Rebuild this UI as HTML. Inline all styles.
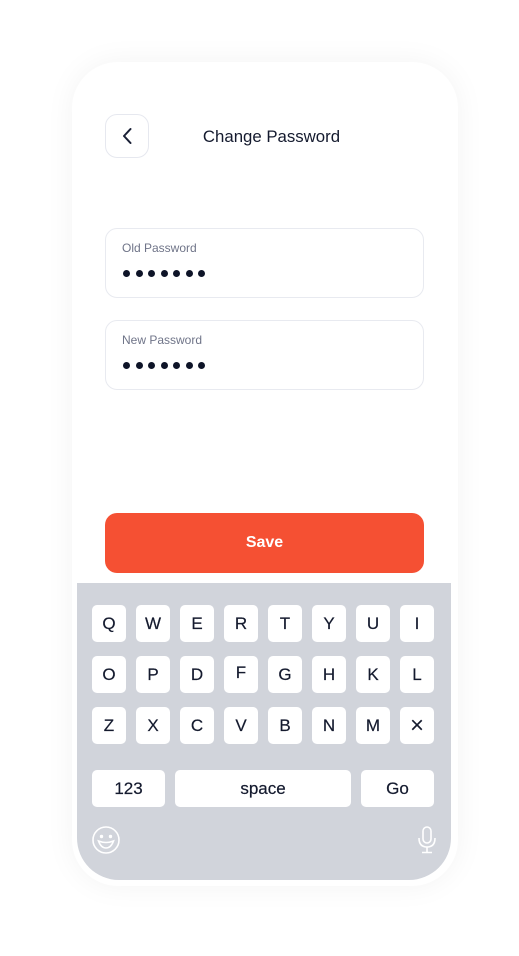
<!DOCTYPE html>
<html><head><style>
body{margin:0;width:519px;height:956px;background:#fff;font-family:"Liberation Sans",sans-serif;position:relative;overflow:hidden}
.card{position:absolute;left:72px;top:62px;width:386px;height:824px;border-radius:46px;background:#fff;box-shadow:0 0 30px rgba(0,0,0,0.05)}
.abs{position:absolute}
.back{left:105px;top:114px;width:42px;height:42px;border:1px solid #e6e8ef;border-radius:12px}
.title{left:0;width:543px;top:127px;text-align:center;font-size:16.8px;color:#141a2e}
.inp{left:105px;width:317px;height:68px;border:1px solid #e8eaf0;border-radius:12px}
.lbl{position:absolute;left:16px;top:12px;font-size:12px;color:#6f7488}
.dots{position:absolute;left:17px;top:41px;display:flex;gap:5.5px}
.dots i{width:7px;height:7px;border-radius:50%;background:#0e1428;display:block}
.save{left:105px;top:513px;width:319px;height:60px;background:#f55033;border-radius:12px;color:#fff;font-weight:bold;font-size:16px;text-align:center;line-height:60px}
.kb{left:77px;top:583px;width:374px;height:297px;background:#d1d4db;border-radius:0 0 42px 42px}
.k{position:absolute;width:34px;height:37px;background:#fff;border-radius:5px;text-align:center;line-height:37px;font-size:17px;color:#141a2e;-webkit-text-stroke:0.2px #141a2e}
</style></head><body>
<div class="card"></div>
<div class="abs back"><svg width="42" height="42"><path d="M24.5 14 L18 21 L24.5 28" fill="none" stroke="#1a2036" stroke-width="2" stroke-linecap="round" stroke-linejoin="round"/></svg></div>
<div class="abs title">Change Password</div>
<div class="abs inp" style="top:228px"><div class="lbl">Old Password</div><div class="dots"><i></i><i></i><i></i><i></i><i></i><i></i><i></i></div></div>
<div class="abs inp" style="top:320px"><div class="lbl">New Password</div><div class="dots"><i></i><i></i><i></i><i></i><i></i><i></i><i></i></div></div>
<div class="abs save">Save</div>
<div class="abs kb"></div>
<div id="keys"></div>
<div class="k" style="left:92px;top:770px;width:73px">123</div>
<div class="k" style="left:175px;top:770px;width:176px">space</div>
<div class="k" style="left:361px;top:770px;width:73px">Go</div>
<svg class="abs" style="left:91px;top:825px" width="30" height="30"><circle cx="15" cy="15" r="13" fill="none" stroke="#fff" stroke-width="1.6"/><circle cx="10.5" cy="11.5" r="1.7" fill="#fff"/><circle cx="19.5" cy="11.5" r="1.7" fill="#fff"/><path d="M7.5 16 Q15 19 22.5 16 Q20 23 15 23 Q10 23 7.5 16Z" fill="none" stroke="#fff" stroke-width="1.6"/></svg>
<svg class="abs" style="left:416px;top:826px" width="22" height="28"><rect x="7" y="1" width="8" height="16" rx="4" fill="none" stroke="#fff" stroke-width="1.6"/><path d="M3 12 Q3 21 11 21 Q19 21 19 12 M11 21 V26 M6 26.5 H16" fill="none" stroke="#fff" stroke-width="1.6"/></svg>
<script>
var rows=[["Q","W","E","R","T","Y","U","I"],["O","P","D","F","G","H","K","L"],["Z","X","C","V","B","N","M","×"]];
var tops=[605,656,707],h="";
rows.forEach(function(r,i){r.forEach(function(c,j){var s=c=="F"?"line-height:33px;":"";if(c=="×")s="font-size:24px;-webkit-text-stroke:0;";h+='<div class="k" style="'+s+'left:'+(92+44*j)+'px;top:'+tops[i]+'px">'+c+'</div>';});});
document.getElementById("keys").innerHTML=h;
</script>
</body></html>
